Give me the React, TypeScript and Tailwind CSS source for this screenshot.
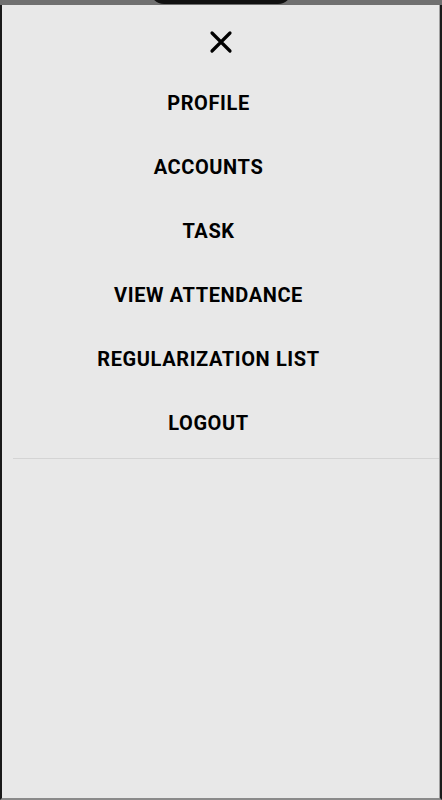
const MENU_ITEMS = [
  "PROFILE",
  "ACCOUNTS",
  "TASK",
  "VIEW ATTENDANCE",
  "REGULARIZATION LIST",
  "LOGOUT",
];

function CloseIcon() {
  return (
    <svg width="24" height="24" viewBox="0 0 24 24" fill="none" aria-hidden>
      <path
        d="M3 3l18 18M21 3L3 21"
        stroke="#000"
        strokeWidth="3.2"
        strokeLinecap="round"
      />
    </svg>
  );
}

export default function App() {
  return (
    <div
      className="flex h-[800px] w-[442px] flex-col bg-[#707070]"
      style={{ fontFamily: "Roboto, 'Liberation Sans', sans-serif" }}
    >
      {/* Status strip with notch */}
      <div className="relative h-[5px] shrink-0 bg-[#707070]">
        <div className="absolute left-[150px] top-[-10px] h-[14px] w-[142px] rounded-b-[14px] bg-[#111]" />
      </div>

      {/* Drawer */}
      <div className="flex flex-1 flex-col border-l-2 border-r-2 border-b-2 border-l-[#1a1a1a] border-r-[#1a1a1a] border-b-[#8a8a8a] bg-[#e8e8e8]">
        <div className="flex flex-1 flex-col border-r border-[#a0a0a0]">
          <button type="button" className="mx-auto mt-[25px] flex items-center justify-center" aria-label="Close menu">
            <CloseIcon />
          </button>

          <ul className="mt-[17px] flex flex-col pr-[24px]">
            {MENU_ITEMS.map((item) => (
              <li
                key={item}
                className="flex h-[64px] items-center justify-center text-[20px] font-bold tracking-[0.6px] text-black"
              >
                {item}
              </li>
            ))}
          </ul>

          <div className="ml-[11px] mt-[3px] h-px bg-[#d4d4d4]" />
        </div>
      </div>
    </div>
  );
}
